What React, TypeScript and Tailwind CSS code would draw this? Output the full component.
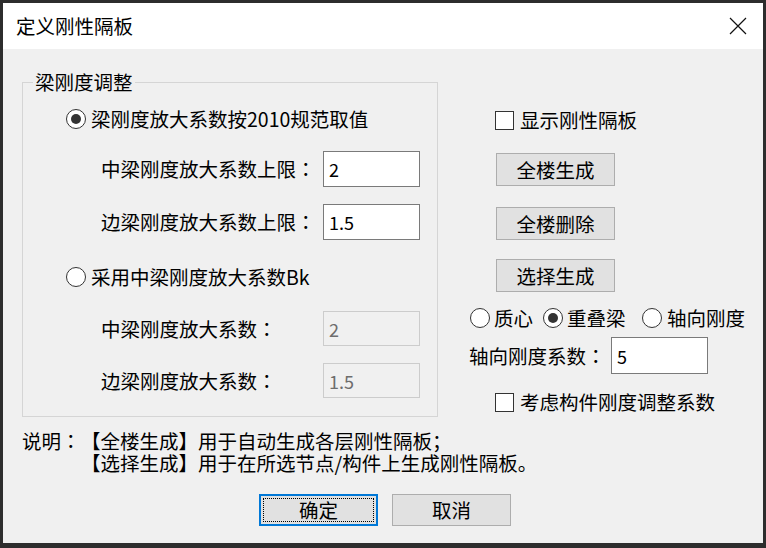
import React from "react";

function Radio({ checked }: { checked?: boolean }) {
  return (
    <span className="flex h-[20px] w-[20px] shrink-0 items-center justify-center rounded-full border border-[#333333] bg-white">
      {checked && <span className="h-[10px] w-[10px] rounded-full bg-[#333333]" />}
    </span>
  );
}

function Checkbox() {
  return <span className="h-[19px] w-[19px] shrink-0 border border-[#333333] bg-white" />;
}

function Colon() {
  return <span className="[font-family:'Noto_Sans_CJK_JP',sans-serif]">：</span>;
}

function Btn({ label, cls = "" }: { label: string; cls?: string }) {
  return (
    <div
      className={
        "flex w-[119px] items-center justify-center border border-[#adadad] bg-[#e1e1e1] text-[19.5px] leading-none " +
        cls
      }
    >
      {label}
    </div>
  );
}

function Field({ value, disabled }: { value: string; disabled?: boolean }) {
  return (
    <div
      className={
        "flex w-[97px] items-center pl-[5px] text-[18px] leading-none " +
        (disabled
          ? "h-[35px] border border-[#cccccc] bg-[#f0f0f0] text-[#6d6d6d]"
          : "h-[36px] border border-[#7a7a7a] bg-white text-black")
      }
    >
      {value}
    </div>
  );
}

function LabelRow({ label, value, disabled, mt }: { label: string; value: string; disabled?: boolean; mt: string }) {
  return (
    <div className={"flex items-center pl-[78px] " + mt}>
      <span className="w-[222px] whitespace-nowrap leading-none">
        {label}
        <Colon />
      </span>
      <Field value={value} disabled={disabled} />
    </div>
  );
}

export default function App() {
  return (
    <div className="h-[548px] w-[766px] bg-[#2d2d2d] pb-[5px] pl-[3px] pr-[3px] pt-[3px] text-black [font-family:'Noto_Sans_CJK_SC',sans-serif]">
      <div className="flex h-full w-full flex-col bg-[#f0f0f0]">
        {/* title bar */}
        <div className="flex h-[46px] shrink-0 items-center justify-between bg-white pl-[13px] pr-[16px]">
          <span className="text-[19.5px] leading-none">定义刚性隔板</span>
          <svg width="18" height="18" viewBox="0 0 18 18">
            <path d="M1 1L17 17M17 1L1 17" stroke="#111111" strokeWidth="1.2" fill="none" />
          </svg>
        </div>

        {/* body */}
        <div className="flex flex-1 flex-col text-[19.5px]">
          <div className="mt-[20px] flex pl-[19px]">
            <fieldset className="m-0 w-[416px] border border-[#d5d5d5] p-0 pb-[14px]">
              <legend className="ml-[10px] h-[26px] px-[2px] leading-[26px]">梁刚度调整</legend>
              <div className="mt-[9px] flex h-[30px] items-center gap-[5px] pl-[43px]">
                <Radio checked />
                <span className="whitespace-nowrap leading-none">梁刚度放大系数按2010规范取值</span>
              </div>
              <LabelRow mt="mt-[17px]" label="中梁刚度放大系数上限" value="2" />
              <LabelRow mt="mt-[17px]" label="边梁刚度放大系数上限" value="1.5" />
              <div className="mt-[22px] flex h-[30px] items-center gap-[5px] pl-[43px]">
                <Radio />
                <span className="whitespace-nowrap leading-none">采用中梁刚度放大系数Bk</span>
              </div>
              <LabelRow mt="mt-[19px]" label="中梁刚度放大系数" value="2" disabled />
              <LabelRow mt="mt-[17px]" label="边梁刚度放大系数" value="1.5" disabled />
            </fieldset>

            <div className="ml-[31px] mt-[36px] flex flex-col">
              <div className="flex h-[30px] items-center gap-[6px] pl-[26px]">
                <Checkbox />
                <span className="whitespace-nowrap leading-none">显示刚性隔板</span>
              </div>
              <Btn label="全楼生成" cls="ml-[27px] mt-[18px] h-[33px]" />
              <Btn label="全楼删除" cls="ml-[27px] mt-[21px] h-[33px]" />
              <Btn label="选择生成" cls="ml-[27px] mt-[19px] h-[33px]" />
              <div className="mt-[11px] flex h-[30px] items-center pl-[1px]">
                <div className="flex w-[73px] items-center gap-[4px]">
                  <Radio />
                  <span className="whitespace-nowrap leading-none">质心</span>
                </div>
                <div className="flex w-[99px] items-center gap-[4px]">
                  <Radio checked />
                  <span className="whitespace-nowrap leading-none">重叠梁</span>
                </div>
                <div className="flex items-center gap-[5px]">
                  <Radio />
                  <span className="whitespace-nowrap leading-none">轴向刚度</span>
                </div>
              </div>
              <div className="mt-[4px] flex h-[37px] items-center">
                <span className="w-[142px] whitespace-nowrap leading-none">
                  轴向刚度系数
                  <Colon />
                </span>
                <div className="flex h-[37px] w-[97px] items-center border border-[#7a7a7a] bg-white pl-[5px] text-[18px] leading-none">
                  5
                </div>
              </div>
              <div className="mt-[13px] flex h-[30px] items-center gap-[6px] pl-[26px]">
                <Checkbox />
                <span className="whitespace-nowrap leading-none">考虑构件刚度调整系数</span>
              </div>
            </div>
          </div>

          {/* note */}
          <div className="mt-[13px] flex pl-[19px] leading-[22px]">
            <span className="w-[59px] shrink-0 whitespace-nowrap">
              说明
              <Colon />
            </span>
            <div className="flex flex-col whitespace-nowrap">
              <span>【全楼生成】用于自动生成各层刚性隔板；</span>
              <span>【选择生成】用于在所选节点/构件上生成刚性隔板。</span>
            </div>
          </div>

          {/* buttons */}
          <div className="mt-[20px] flex gap-[14px] pl-[256px]">
            <div className="flex h-[32px] w-[119px] items-center justify-center border-2 border-[#0078d7] bg-[#e1e1e1] leading-none outline-1 outline-offset-[-5px] outline-dotted outline-black">
              确定
            </div>
            <Btn label="取消" cls="h-[32px]" />
          </div>
        </div>
      </div>
    </div>
  );
}
